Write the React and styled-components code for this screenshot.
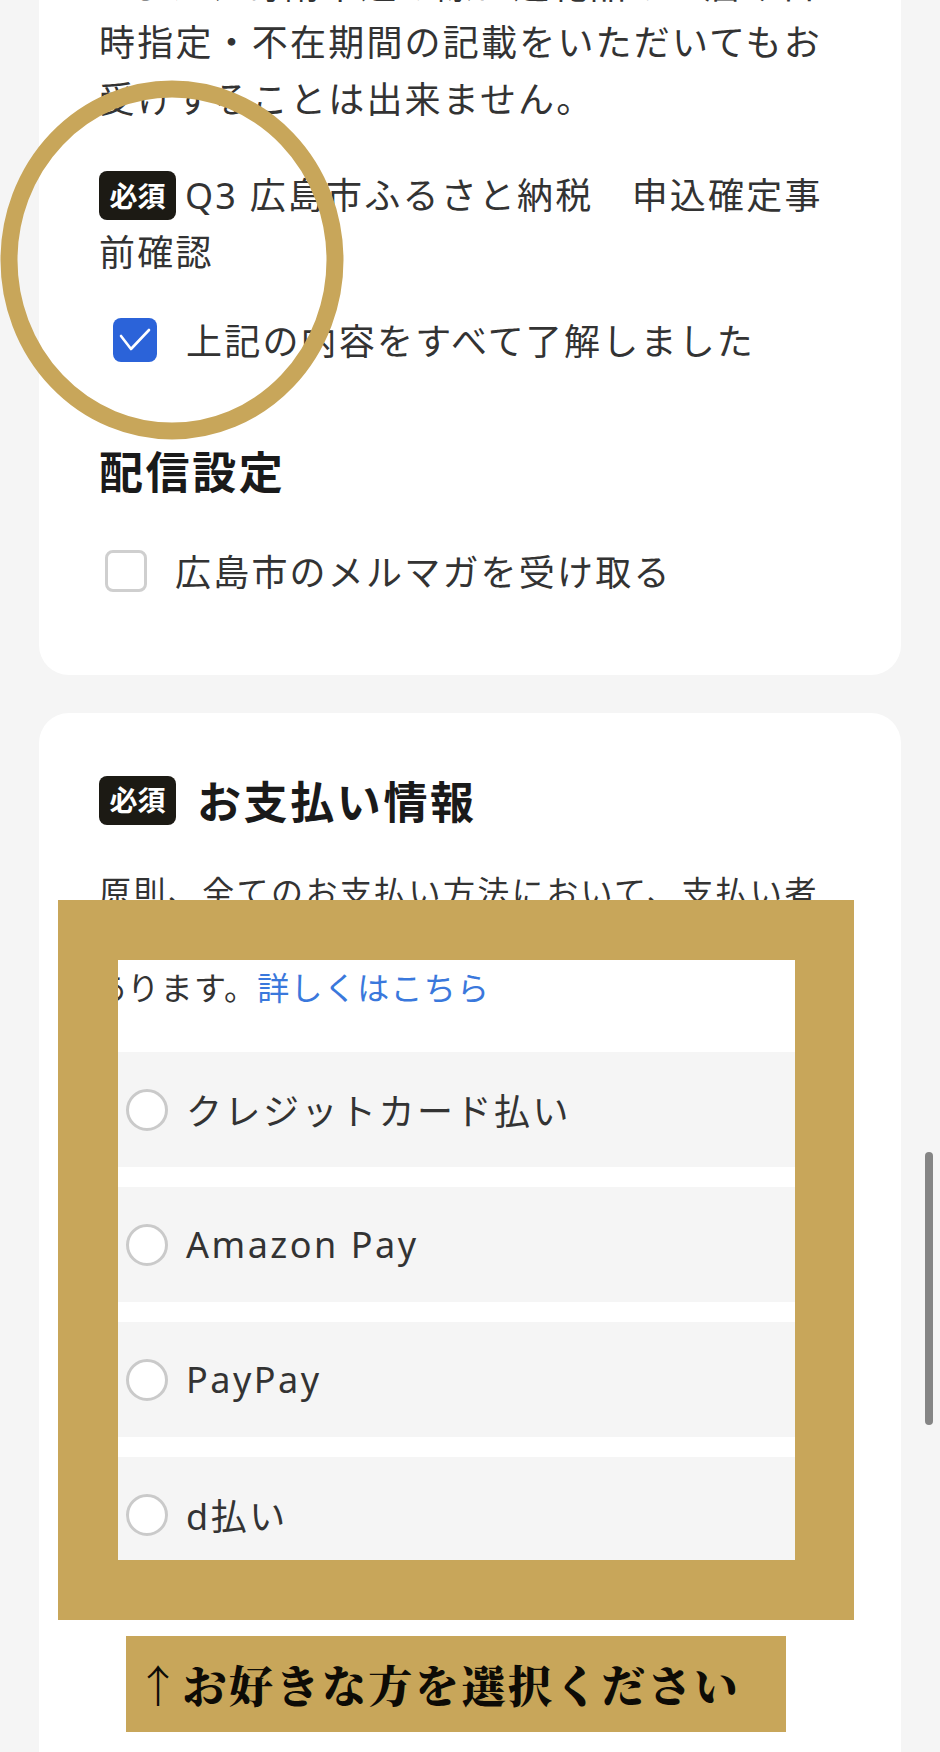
import styled, { createGlobalStyle } from "styled-components";

const GOLD = "#c8a65a";

const GlobalStyle = createGlobalStyle`
  html, body {
    margin: 0;
    padding: 0;
    background: #f5f5f5;
    overflow: hidden;
  }
  * {
    box-sizing: border-box;
  }
`;

const Page = styled.div`
  position: relative;
  width: 940px;
  height: 1752px;
  overflow: hidden;
  padding: 0 39px;
  background: #f5f5f5;
  font-family: "Noto Sans", "Noto Sans CJK JP", sans-serif;
  color: #333;
`;

const Card = styled.section`
  background: #fff;
  border-radius: 30px;
  padding: 57px 60px ${(p) => p.$bottom || 76}px;
  margin-top: ${(p) => p.$top}px;
  min-height: ${(p) => p.$minHeight || 0}px;
`;

const Body = styled.p`
  margin: ${(p) => p.$mt || 0}px 0 0;
  font-size: 36px;
  line-height: 57px;
  letter-spacing: 2.2px;
`;

const Small = styled.p`
  margin: ${(p) => p.$mt || 0}px 0 0;
  font-size: 32px;
  line-height: 48px;
  letter-spacing: 2.4px;
`;

const Badge = styled.span`
  display: inline-flex;
  align-items: center;
  justify-content: center;
  width: 77px;
  height: 49px;
  flex-shrink: 0;
  border-radius: 8px;
  background: #1c1a14;
  color: #fff;
  font-size: 28px;
  font-weight: 700;
  letter-spacing: 0;
  line-height: 1;
  vertical-align: top;
  margin: ${(p) => (p.$inline ? "4px 9px 0 0" : "0")};
`;

const CheckRow = styled.label`
  display: flex;
  align-items: center;
  height: 57px;
  margin-top: ${(p) => p.$mt}px;
  padding-left: ${(p) => p.$indent}px;
  gap: ${(p) => p.$gap}px;
  font-size: 36px;
  letter-spacing: 2.2px;
`;

const Box = styled.span`
  display: flex;
  align-items: center;
  justify-content: center;
  width: ${(p) => p.$size}px;
  height: ${(p) => p.$size}px;
  flex-shrink: 0;
  border-radius: 8px;
  background: ${(p) => (p.$checked ? "#2b63d9" : "#fff")};
  border: ${(p) => (p.$checked ? "none" : "3px solid #cfcfcf")};
`;

const Heading = styled.h2`
  display: flex;
  align-items: center;
  gap: 21px;
  height: 60px;
  margin: ${(p) => p.$mt || 0}px 0 0;
  font-size: 44px;
  font-weight: 700;
  letter-spacing: 2.6px;
  color: #1a1a1a;
`;

const Ellipse = styled.svg`
  position: absolute;
  left: 0;
  top: 80px;
`;

const Frame = styled.div`
  position: absolute;
  left: 58px;
  top: 900px;
  width: 796px;
  height: 720px;
  border: 60px solid ${GOLD};
  border-right-width: 59px;
`;

const Panel = styled.div`
  width: 100%;
  height: 100%;
  background: #fff;
  overflow: hidden;
`;

const Lead = styled.p`
  margin: 0 0 0 -24px;
  padding-top: 4px;
  font-size: 32px;
  line-height: 48px;
  letter-spacing: 1.3px;
  white-space: nowrap;
`;

const Link = styled.span`
  color: #3a78dc;
`;

const Options = styled.div`
  display: flex;
  flex-direction: column;
  gap: 20px;
  margin-top: 40px;
`;

const Option = styled.div`
  display: flex;
  align-items: center;
  gap: 18px;
  height: 115px;
  flex-shrink: 0;
  padding-left: 8px;
  background: #f5f5f5;
  font-size: 36px;
  letter-spacing: 2.5px;
`;

const Radio = styled.span`
  width: 42px;
  height: 42px;
  flex-shrink: 0;
  border-radius: 50%;
  background: #fff;
  border: 3px solid #cacaca;
`;

const Label = styled.div`
  position: absolute;
  left: 126px;
  top: 1636px;
  width: 660px;
  height: 96px;
  display: flex;
  align-items: center;
  padding-left: 10px;
  background: ${GOLD};
  color: #0d0b06;
  font-family: "Noto Serif CJK JP", "Noto Sans CJK JP", serif;
  font-size: 44px;
  font-weight: 900;
  letter-spacing: 2.5px;
`;

const ScrollThumb = styled.div`
  position: absolute;
  right: 7px;
  top: 1152px;
  width: 8px;
  height: 273px;
  border-radius: 4px;
  background: #858585;
`;

const payments = ["クレジットカード払い", "Amazon Pay", "PayPay", "d払い"];

function Check() {
  return (
    <svg width="44" height="44" viewBox="0 0 44 44" fill="none">
      <polyline
        points="8,18 18,31 36,12"
        stroke="#fff"
        strokeWidth="2.6"
        strokeLinecap="round"
        strokeLinejoin="round"
      />
    </svg>
  );
}

export default function App() {
  return (
    <>
      <GlobalStyle />
      <Page>
        <Card $top={-100}>
          <Body>
            ※また、寄附申込の際に返礼品のお届け日時指定・不在期間の記載をいただいてもお受けすることは出来ません。
          </Body>
          <Body $mt={39}>
            <Badge $inline>必須</Badge>Q3 広島市ふるさと納税　申込確定事前確認
          </Body>
          <CheckRow $mt={30} $indent={14} $gap={29}>
            <Box $size={44} $checked>
              <Check />
            </Box>
            上記の内容をすべて了解しました
          </CheckRow>
          <Heading $mt={72}>配信設定</Heading>
          <CheckRow $mt={42} $indent={6} $gap={28}>
            <Box $size={42} />
            広島市のメルマガを受け取る
          </CheckRow>
        </Card>

        <Card $top={38} $minHeight={1200}>
          <Heading>
            <Badge>必須</Badge>
            お支払い情報
          </Heading>
          <Small $mt={38}>
            原則、全てのお支払い方法において、支払い者と寄附者が同一である必要があります。
            <Link>詳しくはこちら</Link>
          </Small>
        </Card>

        <Ellipse width="344" height="360" viewBox="0 0 344 360">
          <ellipse cx="172" cy="180" rx="163" ry="171" fill="none" stroke={GOLD} strokeWidth="17" />
        </Ellipse>

        <Frame>
          <Panel>
            <Lead>
              あります。<Link>詳しくはこちら</Link>
            </Lead>
            <Options>
              {payments.map((name) => (
                <Option key={name}>
                  <Radio />
                  {name}
                </Option>
              ))}
            </Options>
          </Panel>
        </Frame>

        <Label>↑お好きな方を選択ください</Label>

        <ScrollThumb />
      </Page>
    </>
  );
}
